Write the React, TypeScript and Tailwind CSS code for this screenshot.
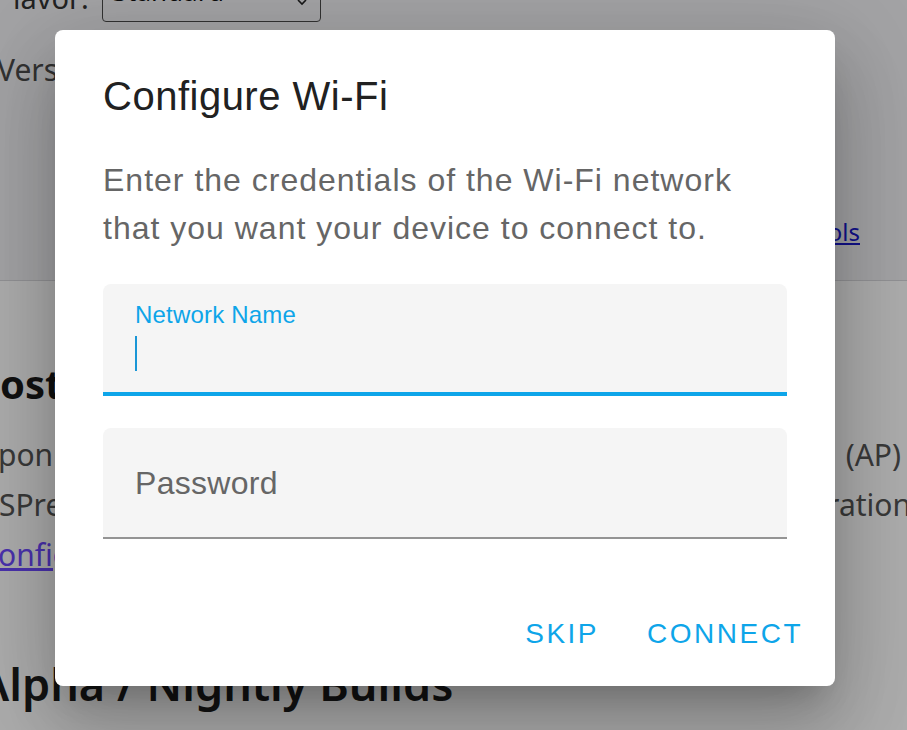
import React from "react";

export default function App() {
  return (
    <div className="relative h-[730px] w-[907px] overflow-hidden bg-white font-['Noto_Sans',sans-serif]">
      {/* page header */}
      <header className="flex h-[281px] flex-col border-b border-[#d8d8dc] bg-[#f1f1f4]">
        <div className="-mt-[14px] flex items-start">
          <span className="ml-[13px] mt-[-3px] text-[29px] leading-[30px] text-[#333]">lavor:</span>
          <div className="ml-[13px] flex h-[36px] w-[219px] items-end justify-between rounded-[4px] border border-[#4a4a4a] pb-[16px] pl-[10px] pr-[13px]">
            <span className="text-[26px] leading-[28px] text-[#111]">Standard</span>
            <svg width="10" height="8" viewBox="0 0 10 8" className="mb-[-1px]">
              <path d="M1 2 L5 6 L9 2" fill="none" stroke="#222" strokeWidth="1.6" />
            </svg>
          </div>
        </div>
        <div className="-ml-[3px] mt-[28px] text-[30px] leading-[40px] text-[#4a4a4a]">Version</div>
        <div className="mt-[127px] flex justify-end pr-[47px]">
          <a className="text-[24px] leading-[30px] text-[#1a1acc] underline">Tools</a>
        </div>
      </header>

      {/* page main */}
      <main className="flex flex-col">
        <div className="mt-[79px] flex justify-between">
          <h2 className="text-[40px] font-bold leading-[48px] text-[#1a1a1a]">ost</h2>
        </div>
        <div className="mt-[22px] flex flex-col text-[30px] leading-[50px] text-[#555]">
          <div className="flex justify-between">
            <span className="-ml-[2px]">pon</span>
            <span className="mr-[6px]">(AP)</span>
          </div>
          <div className="flex justify-between">
            <span className="-ml-[1px]">SPre</span>
            <span className="-mr-[4px]">ration</span>
          </div>
          <div className="flex justify-between">
            <a className="-ml-[2px] text-[#6d4aff] underline">onfig</a>
          </div>
        </div>
        <h2 className="-ml-[21px] mt-[76px] text-[45px] font-semibold leading-[56px] text-[#1c1c1c]">
          Alpha / Nightly Builds
        </h2>
      </main>

      {/* scrim */}
      <div className="absolute inset-0 bg-black/[0.32]" />

      {/* dialog */}
      <div className="absolute left-[55px] top-[30px] flex h-[656px] w-[780px] flex-col rounded-[8px] bg-white font-['Liberation_Sans',Arial,sans-serif] shadow-[0_22px_30px_-14px_rgba(0,0,0,0.2),0_48px_76px_6px_rgba(0,0,0,0.14),0_18px_92px_16px_rgba(0,0,0,0.12)]">
        <h2 className="px-[48px] pt-[34px] text-[40px] leading-[64px] tracking-[0.5px] text-[#212121]">Configure Wi-Fi</h2>
        <p className="mt-[28px] px-[48px] text-[32px] leading-[48px] tracking-[1px] text-[#666]">
          Enter the credentials of the Wi-Fi network
          <br />
          that you want your device to connect to.
        </p>

        <div className="mx-[48px] mt-[32px] flex h-[112px] flex-col rounded-t-[8px] border-b-[4px] border-[#0ea5e9] bg-[#f5f5f5] pl-[32px] pt-[19px]">
          <span className="text-[24px] leading-[24px] tracking-[0.2px] text-[#0ea5e9]">Network Name</span>
          <span className="mt-[9px] h-[35px] w-[2px] bg-[#1a96d6]" />
        </div>

        <div className="mx-[48px] mt-[32px] flex h-[111px] items-center rounded-t-[8px] border-b-2 border-[#949494] bg-[#f5f5f5] pl-[32px]">
          <span className="text-[32px] leading-[32px] tracking-[0.3px] text-[#666]">Password</span>
        </div>

        <div className="mt-auto flex min-h-[104px] items-center justify-end gap-[16px] p-[16px]">
          <button className="h-[72px] px-[16px] text-[28px] uppercase tracking-[2.5px] text-[#0ea5e9]">Skip</button>
          <button className="h-[72px] px-[16px] text-[28px] uppercase tracking-[2.5px] text-[#0ea5e9]">Connect</button>
        </div>
      </div>
    </div>
  );
}
